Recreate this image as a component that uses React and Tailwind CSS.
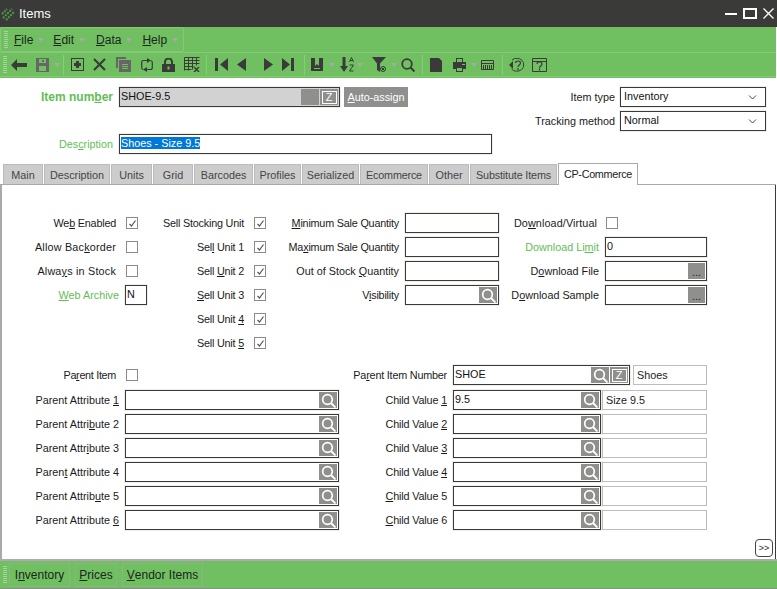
function Grip() {
  return (
    <div className="w-[4px] h-[17px] mx-[3px] shrink-0 flex flex-col justify-between">
      {[0,1,2,3,4,5,6,7,8].map(i => <div key={i} className="h-[1px] bg-[#a3d69b]" />)}
    </div>
  );
}
const D = "#3a3b39";
function Tri() {
  return <svg width="6" height="4" viewBox="0 0 6 4" className="shrink-0"><path d="M0 0h6L3 4z" fill="#a9a9a9" /></svg>;
}
function Sep() {
  return <div className="w-[1px] h-[20px] bg-[#88cc7e] shrink-0" />;
}
function Ic({ w = 16, h = 16, ml = 0, children }) {
  return <svg width={w} height={h} viewBox={`0 0 ${w} ${h}`} className="shrink-0" style={{ marginLeft: ml }}>{children}</svg>;
}
function Toolbar() {
  return (
    <div className="flex items-center h-[25px] border-t border-b border-[#84c878]">
      <Grip />
      <div className="w-[1px]" />
      <Ic w={16} h={12} ml={0}><path d="M0 6l6-6v4h10v4H6v4z" fill={D} /></Ic>
      <Ic w={13} h={14} ml={9}><path d="M0 0h13v14H0z" fill="#666" /><path d="M3 1h7v4H3zM3 8h7v5H3z" fill="#70c062" /><path d="M6 2h2v2H6z" fill="#666" /></Ic>
      <div className="ml-[5px]"><Tri /></div>
      <div className="ml-[3px]"><Sep /></div>
      <Ic w={13} h={13} ml={7}><path d="M0 0h13v13H0z" fill={D} /><path d="M1 1h11v11H1z" fill="#70c062" /><path d="M5 3h3v2h2v3H8v2H5V8H3V5h2z" fill={D} /></Ic>
      <Ic w={13} h={13} ml={9}><path d="M1 1l5.500 5.500L12 1M1 12l5.500-5.500L12 12" stroke={D} strokeWidth="2.200" fill="none" /></Ic>
      <Ic w={15} h={15} ml={10}><path d="M0 0h10v2H2v9H0z" fill="#666" /><path d="M3 3h12v12H3z" fill="#666" /><path d="M6 7h6v1H6zM6 9h6v1H6zM6 11h6v1H6z" fill="#70c062" /></Ic>
      <Ic w={12} h={14} ml={10}><path d="M6 2.500H2.500Q.7 2.500.7 4.500V9.500Q.7 11 2 11.500M6 11.500h3.500Q11.300 11.500 11.300 9.500V4.500Q11.300 3 10 2.500" stroke={D} strokeWidth="1.200" fill="none" /><path d="M6 0l4 2.500L6 5zM6 9l-4 2.500L6 14z" fill={D} /></Ic>
      <Ic w={13} h={14} ml={9}><path d="M3 6V4a3.500 3.500 0 017 0v2" stroke={D} strokeWidth="2" fill="none" /><path d="M0 6h13v8H0z" fill={D} /><path d="M5.500 8.500h2v3h-2z" fill="#70c062" /></Ic>
      <Ic w={16} h={15} ml={9}><path d="M.5.500h15M.5 3.500h15M.5 6.500h15M.5 9.500h9M.500 12.500h7M.5.500v13M4.500.5v13M8.500.5v12M12.500.5v8" stroke={D} fill="none" /><path d="M10 10l5 5M15 10l-5 5" stroke={D} strokeWidth="1.500" /></Ic>
      <div className="ml-[6px]"><Sep /></div>
      <Ic w={13} h={13} ml={8}><path d="M0 0h3v13H0zM13 0v13L5 6.500z" fill={D} /></Ic>
      <Ic w={9} h={13} ml={9}><path d="M9 0v13L0 6.500z" fill={D} /></Ic>
      <Ic w={9} h={13} ml={18}><path d="M0 0v13L9 6.500z" fill={D} /></Ic>
      <Ic w={12} h={13} ml={9}><path d="M0 0v13L8 6.500zM9 0h3v13H9z" fill={D} /></Ic>
      <div className="ml-[10px]"><Sep /></div>
      <Ic w={12} h={13} ml={6}><path d="M0 0h12v13H0z" fill={D} /><path d="M4 0h4v8l-2-2-2 2zM3 10h6v1H3z" fill="#70c062" /></Ic>
      <div className="ml-[6px]"><Tri /></div>
      <Ic w={14} h={15} ml={5}><path d="M2.500 0h3v9h2.500l-4 6L0 9h2.500z" fill={D} /><path d="M9.500 5l2-4.500 2 4.500M10.200 3.500h2.600M9.500 8h4l-4 6h4" stroke={D} fill="none" /></Ic>
      <div className="ml-[3px]"><Tri /></div>
      <Ic w={14} h={15} ml={9}><path d="M0 0h14L8 6.500V15L5 13V6.500z" fill={D} /><circle cx="11" cy="12" r="2.500" stroke={D} fill="none" /><path d="M9.500 10.500l3 3M12.500 10.500l-3 3" stroke={D} /></Ic>
      <div className="ml-[5px]"><Tri /></div>
      <Ic w={14} h={14} ml={4}><circle cx="6" cy="6" r="4.800" stroke={D} strokeWidth="1.800" fill="none" /><path d="M9.500 9.500l4 4" stroke={D} strokeWidth="2" /></Ic>
      <div className="ml-[7px]"><Sep /></div>
      <Ic w={12} h={14} ml={7}><path d="M0 0h9l3 3v11H0z" fill={D} /></Ic>
      <Ic w={13} h={14} ml={11}><path d="M3 0h7v4H3z" fill={D} /><path d="M4 1h5v3H4z" fill="#70c062" /><path d="M0 4h13v7H0z" fill={D} /><path d="M3 9h7v5H3z" fill={D} /><path d="M4 10h5v3H4z" fill="#70c062" /><path d="M9 6h3v1H9z" fill="#70c062" /></Ic>
      <div className="ml-[5px]"><Tri /></div>
      <Ic w={13} h={10} ml={4}><path d="M.5.500h12v9H.5z" stroke={D} fill="none" /><path d="M0 3h13v1H0zM2 5h1v4H2zM4 5h1v4H4zM6 5h1v4H6zM8 5h1v4H8zM10 5h1v4h-1z" fill={D} /></Ic>
      <div className="ml-[8px]"><Sep /></div>
      <Ic w={16} h={14} ml={6}><path d="M3 2a7 6.500 0 11-.5 9" stroke={D} fill="none" /><path d="M0 7l4-4v8z" fill={D} /><path d="M6.500 5a2.500 2 0 115 0c0 2-2.500 2-2.500 4M9 10v2" stroke={D} strokeWidth="1.200" fill="none" /></Ic>
      <Ic w={15} h={14} ml={7}><path d="M.5.500h14v13H.5zM.5 3.500h14" stroke={D} fill="none" /><path d="M5 6a2.500 2 0 115 0c0 2-2.500 2-2.500 4M7.500 10.500v2" stroke={D} strokeWidth="1.200" fill="none" /></Ic>
    </div>
  );
}
function Mag() {
  return (
    <div className="w-[18px] h-[16px] bg-[#8f8f8d] shrink-0 flex items-center justify-center">
      <svg width="15" height="15" viewBox="0 0 15 15"><circle cx="6.500" cy="6.500" r="4.800" stroke="#fff" strokeWidth="1.700" fill="none" /><path d="M10 10l4.500 4.500" stroke="#fff" strokeWidth="1.800" /></svg>
    </div>
  );
}
function Zb() {
  return (
    <div className="w-[18px] h-[16px] bg-[#8f8f8d] shrink-0 flex items-center justify-center ml-[1px]">
      <div className="w-[15px] h-[13px] border border-white flex items-center justify-center text-white text-[11px] leading-none">Z</div>
    </div>
  );
}
function Dots() {
  return <div className="w-[17px] h-[16px] bg-[#8f8f8d] shrink-0 flex items-end justify-center text-[11px] leading-[14px] text-[#222]">...</div>;
}
function Field({ w, value, children, cls = "bg-white", h = "h-[20px]" }) {
  return (
    <div className={`${w} ${h} border border-[#3a3b39] ${cls} flex items-center pl-[1px] pr-[1px] shrink-0 outline outline-1 outline-[#eeeeea]`}>
      <div className="flex-1 min-w-0 text-[#111] truncate leading-[14px] -mt-[2px]">{value}</div>
      {children}
    </div>
  );
}
function RO({ w, value }) {
  return <div className={`${w} h-[20px] border border-[#bdbdbd] bg-white shrink-0 pl-[3px] flex items-center text-[#222] leading-[14px]`}>{value}</div>;
}
function Check({ on }) {
  return (
    <div className="w-[12px] h-[12px] border border-[#8a8a8a] bg-white shrink-0 flex items-center justify-center">
      {on && <svg width="9" height="9" viewBox="0 0 9 9"><path d="M1.500 5l2 2 4-5.500" stroke="#555" strokeWidth="1.200" fill="none" /></svg>}
    </div>
  );
}
function Row({ label, lw, gap, green, track = "", children }) {
  return (
    <div className="h-[24px] flex items-center">
      <div className={`${lw} ${gap} ${track} text-right whitespace-nowrap shrink-0 ${green ? "text-[#62bd55]" : "text-[#1a1a1a]"}`}>{label}</div>
      {children}
    </div>
  );
}
const tabs = [
  ["Main", "w-[40px]", ""], ["Description", "w-[66px]", ""], ["Units", "w-[41px]", ""], ["Grid", "w-[40px]", ""], ["Barcodes", "w-[59px]", ""],
  ["Profiles", "w-[47px]", ""], ["Serialized", "w-[57px]", ""], ["Ecommerce", "w-[68px]", "tracking-[-0.2px]"], ["Other", "w-[40px]", ""], ["Substitute Items", "w-[87px]", "tracking-[-0.15px]"],
];
function Select({ value }) {
  return (
    <div className="w-[146px] h-[20px] border border-[#3a3b39] bg-white flex items-center pl-[3px] pr-[8px] outline outline-1 outline-[#eeeeea] text-[#111]">
      <span className="flex-1 leading-[14px] -mt-[2px]">{value}</span>
      <svg width="9" height="5" viewBox="0 0 9 5"><path d="M1 .5l3.500 3.500L8 .5" stroke="#444" fill="none" /></svg>
    </div>
  );
}
const attrLabels = [
  <>Parent Attribute <u>1</u></>,
  <>Parent Attri<u>b</u>ute 2</>,
  <>Parent Attr<u>i</u>bute 3</>,
  <>Paren<u>t</u> Attribute 4</>,
  <>Parent Attrib<u>u</u>te 5</>,
  <>Parent Attribute <u>6</u></>,
];
const childLabels = [
  <>Child Value <u>1</u></>,
  <>Child Value <u>2</u></>,
  <>Child Value <u>3</u></>,
  <>Child Value <u>4</u></>,
  <><u>C</u>hild Value 5</>,
  <><u>C</u>hild Value 6</>,
];
const NEG = "tracking-[-0.2px]";
export default function App() {
  return (
    <div className="w-[777px] h-[589px] bg-white flex flex-col overflow-hidden text-[10.8px]" style={{ fontFamily: '"Liberation Sans", Arial, sans-serif' }}>
      <div className="h-[27px] bg-[#3a3b39] flex items-center shrink-0">
        <svg width="14" height="14" viewBox="0 0 14 14" className="ml-[1px]"><path d="M1 7l5-5M2 11l9-9M5 13l8-8" stroke="#4f9c46" strokeWidth="2" strokeDasharray="2 1" fill="none" /></svg>
        <span className="ml-[4px] text-[13px] text-white">Items</span>
        <div className="ml-auto flex items-center mr-[3px]">
          <div className="w-[12px] h-[2px] bg-white mr-[6px]" />
          <div className="w-[14px] h-[11px] border-2 border-white mr-[6px]" />
          <svg width="11" height="11" viewBox="0 0 11 11"><path d="M.5.500l10 10M10.500.5l-10 10" stroke="#fff" strokeWidth="1.300" /></svg>
        </div>
      </div>
      <div className="bg-[#70c062] shrink-0 h-[51px] mr-[1px]">
        <div className="h-[25px] flex items-center w-[184px] border border-[#84c878] rounded-[2px] text-[12px] text-[#222]">
          <Grip />
          <span className="ml-[3px]"><u>F</u>ile</span><div className="ml-[5px]"><Tri /></div>
          <span className="ml-[9px]"><u>E</u>dit</span><div className="ml-[5px]"><Tri /></div>
          <span className="ml-[11px]"><u>D</u>ata</span><div className="ml-[5px]"><Tri /></div>
          <span className="ml-[10px]"><u>H</u>elp</span><div className="ml-[5px]"><Tri /></div>
        </div>
        <Toolbar />
      </div>
      <div className="flex-1 flex flex-col min-h-0">
        <div className="h-[86px] shrink-0 flex pt-[9px]">
          <div className="flex flex-col">
            <div className="flex items-center h-[20px]">
              <div className="w-[113px] text-right font-bold text-[12px] text-[#62bd55]">Item num<u>b</u>er</div>
              <div className="ml-[6px]">
                <Field w="w-[221px]" value="SHOE-9.5" cls="bg-[#d2d2d2]"><div className="w-[18px] h-[16px] bg-[#8f8f8d]" /><Zb /></Field>
              </div>
              <div className="ml-[4px] w-[64px] h-[20px] bg-[#8f8f8d] text-white flex items-center justify-center"><span><u>A</u>uto-assign</span></div>
            </div>
            <div className="flex items-center h-[20px] mt-[27px]">
              <div className="w-[113px] text-right text-[#62bd55]">Des<u>c</u>ription</div>
              <div className="ml-[6px]">
                <Field w="w-[373px]" value={<span className="bg-[#0078d7] text-white">Shoes - Size 9.5</span>} />
              </div>
            </div>
          </div>
          <div className="ml-auto mr-[11px] flex flex-col gap-[4px]">
            <div className="flex items-center"><div className="mr-[5px] ml-auto text-[#1a1a1a]">Item type</div><Select value="Inventory" /></div>
            <div className="flex items-center"><div className="mr-[5px] ml-auto text-[#1a1a1a]">Tracking method</div><Select value="Normal" /></div>
          </div>
        </div>
        <div className="shrink-0 h-[21px] flex items-end pl-[3px] gap-[1px] border-b border-[#a9a9a9] mr-[1px]">
          {tabs.map(([t, w, tr]) => (
            <div key={t} className={`${w} ${tr} h-[20px] shrink-0 bg-[#cccccc] border border-[#bbbbbb] border-b-0 text-center text-[#444] leading-[20px]`}>{t}</div>
          ))}
          <div className="w-[80px] h-[22px] -mb-[1px] shrink-0 bg-white border border-[#a9a9a9] border-b-0 text-center text-[#222] leading-[20px] tracking-[-0.3px]">CP-Commerce</div>
        </div>
        <div className="flex-1 border-l-2 border-[#a9a9a9] border-r border-r-[#3a3b39] mr-[1px] flex flex-col relative">
          <div className="flex pt-[26px]">
            <div className="flex flex-col w-[150px] shrink-0">
              <Row lw="w-[114px]" gap="mr-[10px]" track={NEG} label={<>We<u>b</u> Enabled</>}><Check on /></Row>
              <Row lw="w-[114px]" gap="mr-[10px]" track="tracking-[0.2px]" label={<>Allow Bac<u>k</u>order</>}><Check /></Row>
              <Row lw="w-[114px]" gap="mr-[10px]" track="tracking-[0.2px]" label={<>Alwa<u>y</u>s in Stock</>}><Check /></Row>
              <Row lw="w-[117px]" gap="mr-[6px]" green label={<><u>W</u>eb Archive</>}><Field w="w-[22px]" value="N" /></Row>
            </div>
            <div className="flex flex-col w-[124px] shrink-0">
              <Row lw="w-[92px]" gap="mr-[10px]" track={NEG} label={<>Sell Stockin<u>g</u> Unit</>}><Check on /></Row>
              <Row lw="w-[92px]" gap="mr-[10px]" track={NEG} label={<>Sel<u>l</u> Unit 1</>}><Check on /></Row>
              <Row lw="w-[92px]" gap="mr-[10px]" track={NEG} label={<>Sell <u>U</u>nit 2</>}><Check on /></Row>
              <Row lw="w-[92px]" gap="mr-[10px]" track={NEG} label={<><u>S</u>ell Unit 3</>}><Check on /></Row>
              <Row lw="w-[92px]" gap="mr-[10px]" track={NEG} label={<>Sell Unit <u>4</u></>}><Check on /></Row>
              <Row lw="w-[92px]" gap="mr-[10px]" track={NEG} label={<>Sell Unit <u>5</u></>}><Check on /></Row>
            </div>
            <div className="flex flex-col w-[228px] shrink-0">
              <Row lw="w-[123px]" gap="mr-[6px]" track={NEG} label={<><u>M</u>inimum Sale Quantity</>}><Field w="w-[94px]" /></Row>
              <Row lw="w-[123px]" gap="mr-[6px]" track={NEG} label={<>Ma<u>x</u>imum Sale Quantity</>}><Field w="w-[94px]" /></Row>
              <Row lw="w-[123px]" gap="mr-[6px]" label={<>Out of Stock <u>Q</u>uantity</>}><Field w="w-[94px]" /></Row>
              <Row lw="w-[123px]" gap="mr-[6px]" track={NEG} label={<>V<u>i</u>sibility</>}><Field w="w-[94px]"><Mag /></Field></Row>
            </div>
            <div className="flex flex-col">
              <Row lw="w-[93px]" gap="mr-[9px]" track="tracking-[0.1px]" label={<>Do<u>w</u>nload/Virtual</>}><Check /></Row>
              <Row lw="w-[95px]" gap="mr-[6px]" green label={<>Download Li<u>m</u>it</>}><Field w="w-[102px]" value="0" /></Row>
              <Row lw="w-[95px]" gap="mr-[6px]" label={<>D<u>o</u>wnload File</>}><Field w="w-[102px]"><Dots /></Field></Row>
              <Row lw="w-[95px]" gap="mr-[6px]" label={<>D<u>o</u>wnload Sample</>}><Field w="w-[102px]"><Dots /></Field></Row>
            </div>
          </div>
          <div className="flex mt-[8px]">
            <div className="flex flex-col w-[345px] shrink-0">
              <Row lw="w-[114px]" gap="mr-[10px]" track="tracking-[-0.3px]" label={<>Pa<u>r</u>ent Item</>}><Check /></Row>
              <div className="h-[1px]" />
              {attrLabels.map((l, i) => (
                <Row key={i} lw="w-[117px]" gap="mr-[6px]" label={l}><Field w="w-[214px]"><Mag /></Field></Row>
              ))}
            </div>
            <div className="flex flex-col">
              <Row lw="w-[100px]" gap="mr-[6px]" track={NEG} label={<>Pa<u>r</u>ent Item Number</>}>
                <Field w="w-[177px]" value="SHOE"><Mag /><Zb /></Field>
                <div className="ml-[3px]"><RO w="w-[74px]" value="Shoes" /></div>
              </Row>
              <div className="h-[1px]" />
              {childLabels.map((l, i) => (
                <Row key={i} lw="w-[100px]" gap="mr-[6px]" track="tracking-[-0.15px]" label={l}>
                  <Field w="w-[148px]" value={i === 0 ? "9.5" : ""}><Mag /></Field>
                  <div className="ml-[1px]"><RO w="w-[105px]" value={i === 0 ? "Size 9.5" : ""} /></div>
                </Row>
              ))}
            </div>
          </div>
          <div className="absolute right-[2px] bottom-[2px] w-[18px] h-[18px] border border-[#444] rounded-[4px] bg-white flex items-center justify-center text-[9px] leading-none text-[#222]">&gt;&gt;</div>
        </div>
      </div>
      <div className="h-[2px] bg-[#b0aab0] shrink-0" />
      <div className="h-[28px] bg-[#70c062] shrink-0 flex items-center text-[12px] text-[#222] border-b border-[#8c8c8c]">
        <Grip />
        <div className="ml-[-1px] h-[24px] w-[61px] border border-[#8bb585] flex items-center justify-center">I<u>n</u>ventory</div>
        <div className="ml-[5px] h-[24px] w-[42px] border border-[#8bb585] flex items-center justify-center"><u>P</u>rices</div>
        <div className="ml-[5px] h-[24px] w-[81px] border border-[#8bb585] flex items-center justify-center"><u>V</u>endor Items</div>
      </div>
    </div>
  );
}
